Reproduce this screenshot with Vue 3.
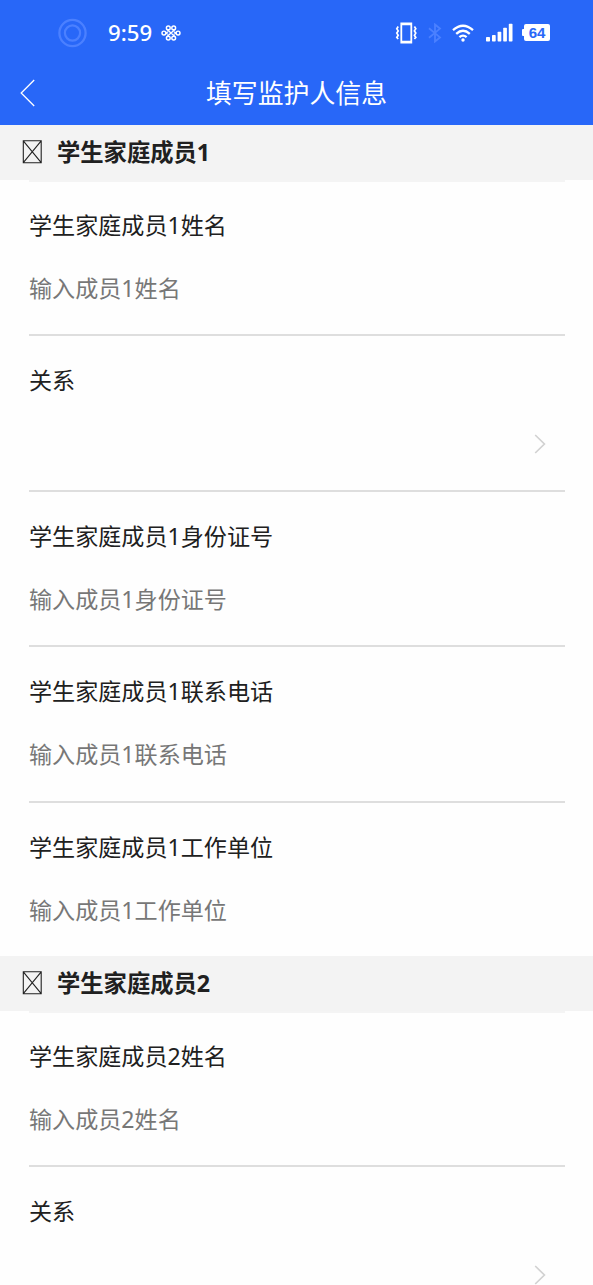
<script setup>
const fields = (n) => [
  { label: `学生家庭成员${n}姓名`, hint: `输入成员${n}姓名` },
  { label: '关系', select: true },
  { label: `学生家庭成员${n}身份证号`, hint: `输入成员${n}身份证号` },
  { label: `学生家庭成员${n}联系电话`, hint: `输入成员${n}联系电话` },
  { label: `学生家庭成员${n}工作单位`, hint: `输入成员${n}工作单位` },
]
const sections = [
  { n: 1, rows: fields(1) },
  { n: 2, rows: fields(2).slice(0, 2) },
]
</script>

<template>
  <div class="screen">
    <header class="top">
      <div class="status">
        <svg class="ring" width="30" height="30" viewBox="0 0 30 30" fill="none" stroke="#4b80ff">
          <circle cx="15.5" cy="15" r="13.1" stroke-width="2.3" />
          <circle cx="15.5" cy="15" r="7.6" stroke-width="2.2" />
        </svg>
        <span class="time">9:59</span>
        <svg class="knot" width="20" height="16" viewBox="0 0 20 16" fill="none" stroke="#fff" stroke-width="1.45">
          <circle cx="2.9" cy="8" r="1.9" />
          <circle cx="17.1" cy="8" r="1.9" />
          <circle cx="7.3" cy="2.9" r="1.9" />
          <circle cx="12.7" cy="2.9" r="1.9" />
          <circle cx="7.3" cy="13.1" r="1.9" />
          <circle cx="12.7" cy="13.1" r="1.9" />
          <path d="M5.8 4.2 14.2 11.8M14.2 4.2 5.8 11.8M4.5 7 7 9.4M4.5 9 7 6.6M15.5 7 13 9.4M15.5 9 13 6.6" stroke-width="1.3" />
        </svg>
        <div class="spacer"></div>
        <svg class="vibrate" width="22" height="22" viewBox="0 0 22 22" fill="none" stroke="#fff">
          <path d="M6.3 1.5H16.3V20.5H6.3Z" stroke-width="1.8" />
          <path d="M6.3 2.2H16.3M6.3 19.8H16.3" stroke-width="2.2" />
          <path d="M3.2 4.5 1.8 6.7 3.2 8.9 1.8 11.1 3.2 13.3 1.8 15.5 3.2 17M19.4 4.5 20.8 6.7 19.4 8.9 20.8 11.1 19.4 13.3 20.8 15.5 19.4 17" stroke-width="1.7" />
        </svg>
        <svg class="bluetooth" width="14" height="20" viewBox="0 0 14 20" fill="none" stroke="#4b80ff" stroke-width="1.8">
          <path d="M1 5.3 12 14.4 7 18.5V1.5L12 5.6 1 14.7" />
        </svg>
        <svg class="wifi" width="22" height="18" viewBox="0 0 22 18" fill="none" stroke="#fff" stroke-width="2.3">
          <path d="M1 6.2Q11-2.8 21 6.2M4.2 9.8Q11 3.7 17.8 9.8M7.4 13.2Q11 10 14.6 13.2" />
          <circle cx="11" cy="16" r="1.7" fill="#fff" stroke="none" />
        </svg>
        <svg class="signal" width="28" height="19" viewBox="0 0 28 19" fill="#fff">
          <rect x="0" y="14" width="4" height="4.5" rx=".7" />
          <rect x="6" y="12" width="3.7" height="6.5" rx=".7" />
          <rect x="11.6" y="8.7" width="3.7" height="9.8" rx=".7" />
          <rect x="17.2" y="4.8" width="3.7" height="13.7" rx=".7" />
          <rect x="22.8" y=".8" width="3.7" height="17.7" rx=".7" />
        </svg>
        <div class="battery">64</div>
      </div>
      <div class="nav">
        <svg class="back" width="16" height="28" viewBox="0 0 16 28" fill="none" stroke="#fff" stroke-width="1.3">
          <path d="M14.2 1 1.2 14 14.2 27" />
        </svg>
        <h1>填写监护人信息</h1>
      </div>
    </header>
    <section v-for="s in sections" :key="s.n">
      <div class="heading">
        <svg width="20" height="24" viewBox="0 0 20 24" fill="none" stroke="#222" stroke-width="1.1">
          <path d="M1.3.8H19.2V22.7H1.3ZM1.3.8 19.2 22.7M19.2.8 1.3 22.7" />
        </svg>
        <h2>学生家庭成员{{ s.n }}</h2>
      </div>
      <div class="rows">
        <div v-for="r in s.rows" :key="r.label" class="row">
          <div class="label">{{ r.label }}</div>
          <div class="value">
            <span v-if="r.hint">{{ r.hint }}</span>
            <svg v-if="r.select" width="12" height="20" viewBox="0 0 12 20" fill="none" stroke="#d2d2d2" stroke-width="1.7">
              <path d="M1.2 1 10.4 10 1.2 19" />
            </svg>
          </div>
        </div>
      </div>
    </section>
  </div>
</template>

<style>
body { overflow: hidden; background: #fff; }
</style>

<style scoped>
.screen {
  height: 1285px;
  overflow: hidden;
  background: #fefefe;
  font-family: "Noto Sans", "Noto Sans CJK SC", sans-serif;
  color: #202020;
}
h1, h2 { margin: 0; }
svg { display: block; flex: none; }
.top { height: 125px; background: #2867f8; color: #fff; }
.status { height: 65px; display: flex; align-items: center; padding: 0 43px 0 57px; box-sizing: border-box; }
.time { margin-left: 21px; width: 52.5px; font-size: 22.2px; font-weight: 500; line-height: 30px; white-space: nowrap; }
.spacer { flex: 1; }
.bluetooth { margin-left: 11px; }
.wifi { margin-left: 10px; }
.signal { margin-left: 12px; }
.battery {
  position: relative;
  margin-left: 10px;
  width: 26px;
  height: 17px;
  border-radius: 2px;
  background: #fff;
  color: #2867f8;
  font: bold 15px/18px "Liberation Sans", sans-serif;
  text-align: center;
}
.battery::before {
  content: "";
  position: absolute;
  left: -2px;
  top: 5px;
  width: 3px;
  height: 7px;
  border-radius: 1px 0 0 1px;
  background: #fff;
}
.nav { height: 56px; display: grid; grid-template-columns: 60px 1fr 60px; align-items: center; }
.back { margin-left: 20px; }
h1 { text-align: center; font-size: 25.9px; font-weight: 400; line-height: 36px; }
.heading { height: 55px; display: flex; align-items: center; padding: 0 22px 2px; box-sizing: border-box; background: #f3f3f3; }
h2 { margin-left: 15px; font-size: 23.3px; line-height: 34px; font-weight: 700; }
.rows { margin: 0 28px 0 29px; border-top: 2px solid #f4f4f4; }
.row { height: 155.5px; box-sizing: border-box; border-bottom: 2px solid #dedede; padding-top: 26px; }
.row:first-child { height: 154px; padding-top: 25px; }
.row:nth-child(5) { height: 153.5px; border-bottom: 0; }
.label, .value { font-size: 23.1px; line-height: 36px; height: 36px; white-space: nowrap; }
.value { margin-top: 27px; display: flex; align-items: center; color: #777; }
.value svg { margin: 2px 19px 0 auto; }
</style>
